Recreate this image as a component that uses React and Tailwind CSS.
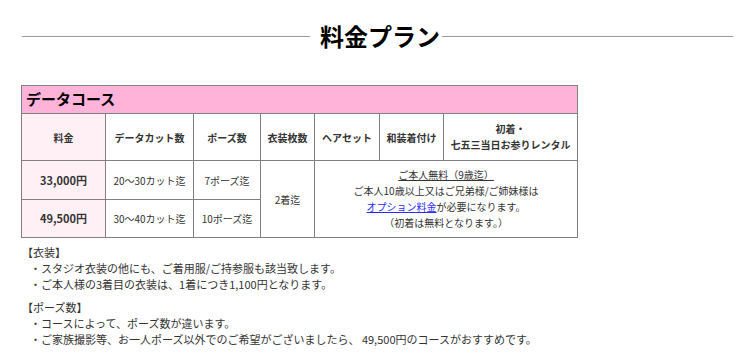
const cell = 'border border-[#808080] text-center align-middle';

const App = () => {
  return (
    <div className="w-[750px] h-[364px] bg-white overflow-hidden font-['Noto_Sans_CJK_JP',sans-serif] text-[#333]">
      {/* 見出し */}
      <div className="flex items-center h-9 mt-[18px]">
        <div className="ml-[22px] w-[288px] h-px bg-[#999]"></div>
        <h2 className="ml-[10px] text-[24px] leading-9 font-bold text-black">料金プラン</h2>
        <div className="ml-[2px] w-[291px] h-px bg-[#999]"></div>
      </div>

      {/* 料金表 */}
      <table className="mt-[31px] ml-[21px] w-[556px] table-fixed border-collapse text-[10px]">
        <colgroup>
          <col className="w-[84px]" />
          <col className="w-[88px]" />
          <col className="w-[67px]" />
          <col className="w-[54px]" />
          <col className="w-[65px]" />
          <col className="w-[64px]" />
          <col className="w-[134px]" />
        </colgroup>
        <tbody>
          <tr className="h-[28px]">
            <td colSpan={7} className="border border-[#808080] bg-[#ffb3d9] pl-[4px] text-left text-[15px] font-bold text-black">
              データコース
            </td>
          </tr>
          <tr className="h-[47px] font-bold">
            <td className={`${cell} bg-[#fff0f5]`}>料金</td>
            <td className={cell}>データカット数</td>
            <td className={cell}>ポーズ数</td>
            <td className={cell}>衣装枚数</td>
            <td className={cell}>ヘアセット</td>
            <td className={cell}>和装着付け</td>
            <td className={`${cell} leading-4`}>
              初着・
              <br />
              七五三当日お参りレンタル
            </td>
          </tr>
          <tr className="h-[39px]">
            <td className={`${cell} bg-[#fff0f5] text-[11px] font-bold`}>33,000円</td>
            <td className={cell}>20〜30カット迄</td>
            <td className={cell}>7ポーズ迄</td>
            <td rowSpan={2} className={cell}>2着迄</td>
            <td rowSpan={2} colSpan={3} className={`${cell} leading-4`}>
              <span className="underline">ご本人無料（9歳迄）</span>
              <br />
              ご本人10歳以上又はご兄弟様/ご姉妹様は
              <br />
              <span className="text-[#2b2bff] underline">オプション料金</span>が必要になります。
              <br />
              （初着は無料となります。）
            </td>
          </tr>
          <tr className="h-[38px]">
            <td className={`${cell} bg-[#fff0f5] text-[11px] font-bold`}>49,500円</td>
            <td className={cell}>30〜40カット迄</td>
            <td className={cell}>10ポーズ迄</td>
          </tr>
        </tbody>
      </table>

      {/* 注意事項 */}
      <div className="mt-[6px] ml-[22px] text-[11px] leading-4">
        <p>【衣装】</p>
        <ul className="pl-[8px]">
          <li>・スタジオ衣装の他にも、ご着用服/ご持参服も該当致します。</li>
          <li>・ご本人様の3着目の衣装は、1着につき1,100円となります。</li>
        </ul>
        <p className="mt-[7px]">【ポーズ数】</p>
        <ul className="pl-[8px]">
          <li>・コースによって、ポーズ数が違います。</li>
          <li>・ご家族撮影等、お一人ポーズ以外でのご希望がございましたら、 49,500円のコースがおすすめです。</li>
        </ul>
      </div>
    </div>
  );
};

export default App;
